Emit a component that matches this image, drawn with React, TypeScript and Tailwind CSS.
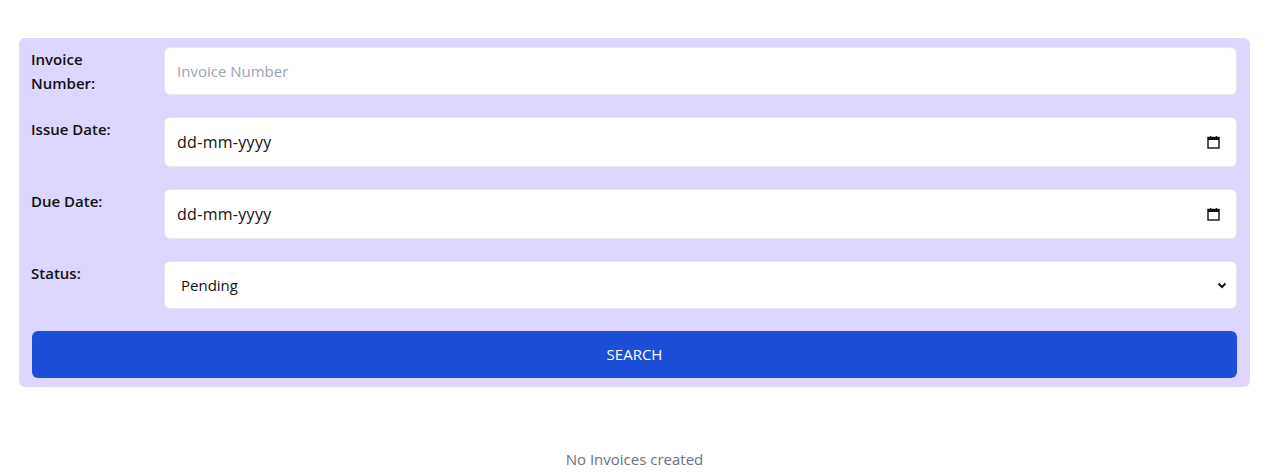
import React from 'react';

function CalendarIcon() {
  return (
    <svg width="13" height="14" viewBox="0 0 13 14" className="shrink-0">
      <rect x="1" y="2.5" width="11" height="10.5" fill="none" stroke="#111" strokeWidth="1.4" />
      <rect x="1" y="2.5" width="11" height="2.5" fill="#111" />
      <rect x="3" y="1" width="1.2" height="2" fill="#111" />
      <rect x="8.8" y="1" width="1.2" height="2" fill="#111" />
    </svg>
  );
}

function DateField({ h }: { h: string }) {
  return (
    <div className={`flex flex-1 items-center justify-between rounded-md border border-[#e5e7eb] bg-white pl-[12px] pr-[16px] ${h}`}>
      <span className="text-[16px] tracking-[0.3px] text-[#111]">dd-mm-yyyy</span>
      <CalendarIcon />
    </div>
  );
}

export default function App() {
  const font = { fontFamily: '"Open Sans", "Noto Sans", sans-serif' };
  return (
    <div className="min-h-screen bg-white pl-[19px] pr-[22px] pt-[38px]" style={font}>
      {/* 검색 폼 */}
      <div className="flex flex-col gap-[22px] rounded-md bg-[#ddd6fe] pb-[9px] pl-[12px] pr-[13px] pt-[9px]">
        <div className="flex">
          <label className="w-[133px] text-[15px] font-semibold leading-[24px] text-[#111]">
            Invoice
            <br />
            Number:
          </label>
          <input
            placeholder="Invoice Number"
            className="h-[48px] flex-1 rounded-md border border-[#e5e7eb] bg-white px-[12px] text-[15px] outline-none placeholder:text-[#9ca3af]"
          />
        </div>
        <div className="flex">
          <label className="w-[133px] text-[15px] font-semibold leading-[24px] text-[#111]">Issue Date:</label>
          <DateField h="h-[50px]" />
        </div>
        <div className="flex">
          <label className="w-[133px] text-[15px] font-semibold leading-[24px] text-[#111]">Due Date:</label>
          <DateField h="h-[50px]" />
        </div>
        <div className="flex">
          <label className="w-[133px] text-[15px] font-semibold leading-[24px] text-[#111]">Status:</label>
          <div className="flex h-[48px] flex-1 items-center justify-between rounded-md border border-[#e5e7eb] bg-white pl-[16px] pr-[9px]">
            <span className="text-[15px] text-[#111]">Pending</span>
            <svg width="10" height="7" viewBox="0 0 10 7">
              <path d="M1.5 1.5 L5 5 L8.5 1.5" fill="none" stroke="#111" strokeWidth="2" />
            </svg>
          </div>
        </div>
        <button className="ml-px h-[47px] rounded-md bg-[#1d4ed8] text-[15px] text-white">SEARCH</button>
      </div>

      <p className="mt-[60px] text-center text-[15px] leading-[24px] text-[#6b7280]">No Invoices created</p>
    </div>
  );
}
